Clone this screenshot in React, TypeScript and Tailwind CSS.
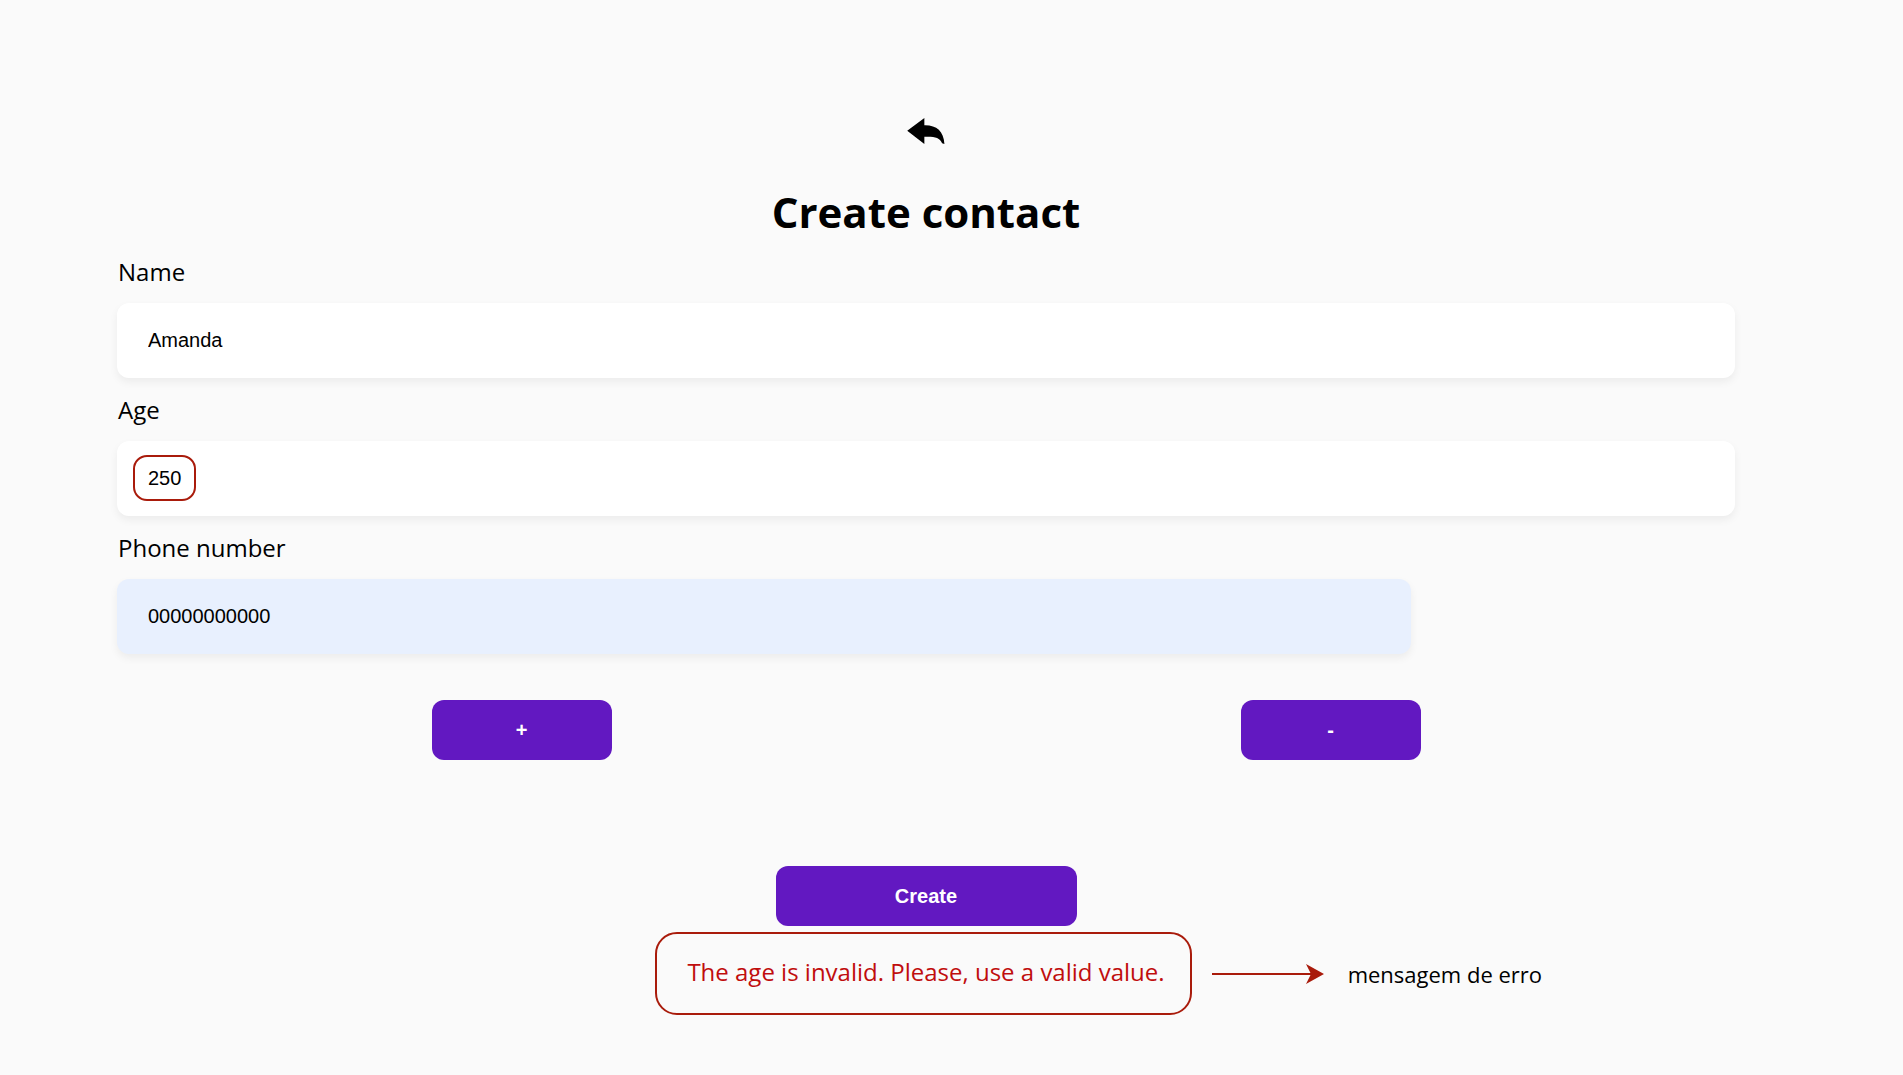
import React, { useState } from "react";

type FieldProps = {
  id: string;
  label: string;
  initial: string;
  className: string;
  marked?: boolean;
};

function Field({ id, label, initial, className, marked }: FieldProps) {
  const [value, setValue] = useState(initial);
  return (
    <div className="mt-4">
      <label htmlFor={id} className="mb-[15px] block pl-px text-2xl leading-8">
        {label}
      </label>
      <div className="relative">
        <input
          id={id}
          type="text"
          value={value}
          onChange={(e) => setValue(e.target.value)}
          className={`block h-[75px] rounded-xl px-[31px] font-['Liberation_Sans',Arial,sans-serif] text-xl shadow-[0_4px_8px_rgba(0,0,0,0.06)] outline-none ${className}`}
        />
        {marked && (
          <span
            aria-hidden="true"
            className="pointer-events-none absolute top-[14px] left-4 h-[46px] w-[63px] rounded-[14px] border-2 border-[#a91b0b]"
          />
        )}
      </div>
    </div>
  );
}

const buttonStyle =
  "h-[60px] rounded-xl bg-[#6218c1] font-['Liberation_Sans',Arial,sans-serif] text-xl font-bold text-white";

export default function App() {
  return (
    <main className="min-h-screen bg-[#fafafa] pt-[118px] pr-[168px] pb-[60px] pl-[117px] font-['Open_Sans',sans-serif] text-black">
      <a href="#back" aria-label="Back" className="mx-auto block w-[38px]">
        <svg viewBox="54 53 114 79" className="block h-[26px] w-[38px]" fill="#000">
          <path d="M54 92 L106 53 V75 C142 74 165 92 167 132 L160 130 C152 112 138 109 106 110 V132 Z" />
        </svg>
      </a>
      <h1 className="mt-10 text-center text-[42px] leading-[56px] font-bold">Create contact</h1>

      <form onSubmit={(e) => e.preventDefault()}>
        <Field id="name" label="Name" initial="Amanda" className="w-full bg-white" />
        <Field id="age" label="Age" initial="250" className="w-full bg-white" marked />
        <Field id="phone" label="Phone number" initial="00000000000" className="w-4/5 bg-[#e8f0fe]" />

        <div className="mt-[46px] grid grid-cols-2 justify-items-center">
          <button type="button" aria-label="Add phone number" className={`${buttonStyle} w-[180px]`}>
            +
          </button>
          <button type="button" aria-label="Remove phone number" className={`${buttonStyle} w-[180px]`}>
            -
          </button>
        </div>

        <button type="submit" className={`${buttonStyle} mx-auto mt-[106px] block w-[301px]`}>
          Create
        </button>
      </form>

      <div className="mt-1.5 grid grid-cols-[1fr_auto_1fr] items-center pr-[5px]">
        <p
          role="alert"
          className="col-start-2 rounded-[22px] border-2 border-[#a91b0b] pt-[22px] pr-[25px] pb-[25px] pl-[30px] text-2xl leading-8 text-[#c00d0d]"
        >
          The age is invalid. Please, use a valid value.
        </p>
        <div className="flex items-center gap-6 pl-5">
          <svg viewBox="0 0 112 20" className="h-5 w-28 shrink-0" fill="#a91b0b">
            <rect x="0" y="9" width="100" height="2" />
            <path d="M94 0 L112 10 L94 20 L99 10 Z" />
          </svg>
          <span className="text-[22px] leading-8 whitespace-nowrap">mensagem de erro</span>
        </div>
      </div>
    </main>
  );
}
